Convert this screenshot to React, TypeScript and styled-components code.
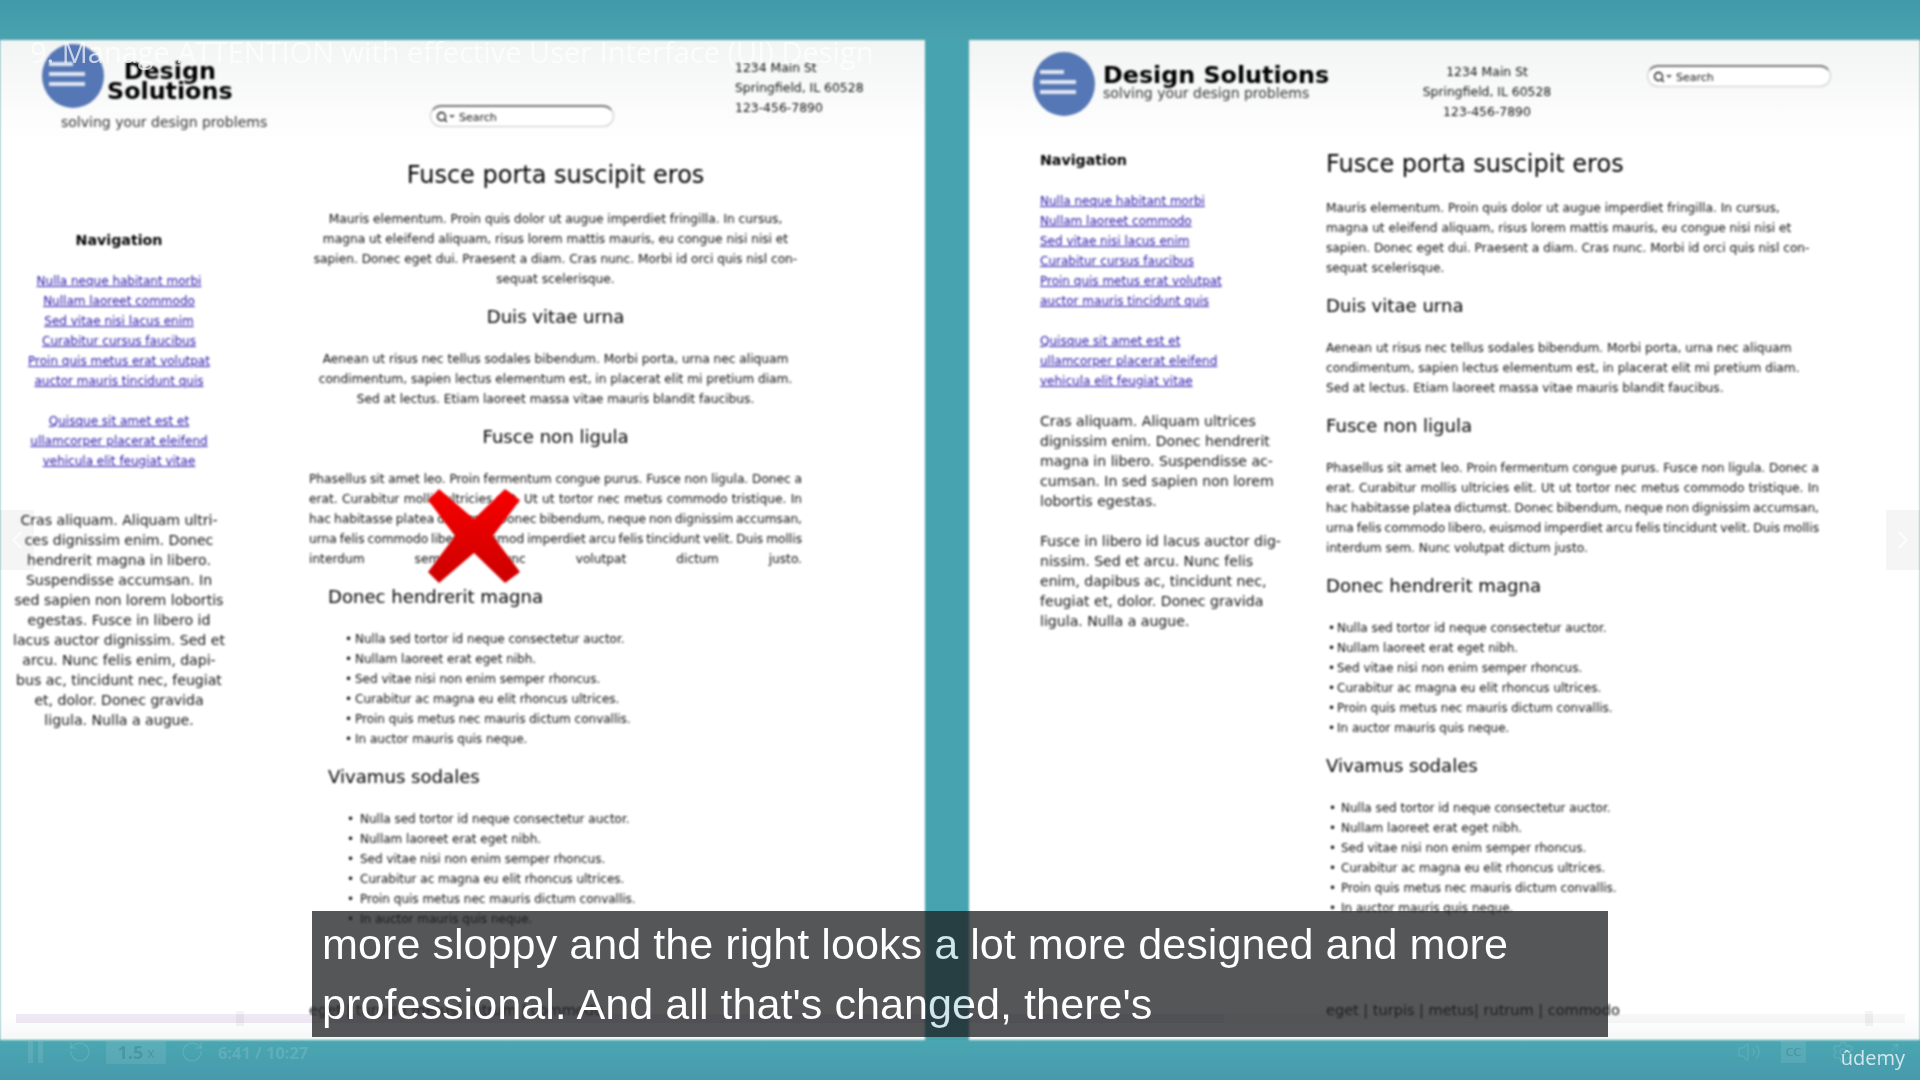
import styled, { createGlobalStyle } from 'styled-components'
import { RotateCcw, RotateCw, Volume2, Settings, Maximize2, ChevronLeft, ChevronRight, Search as SearchIcon } from 'lucide-react'

const GlobalStyle = createGlobalStyle`
  html, body { margin: 0; padding: 0; background: #479fab; }
  body { font-family: "DejaVu Sans", sans-serif; overflow: hidden; }
`

const intro = [
  'Mauris elementum. Proin quis dolor ut augue imperdiet fringilla. In cursus,',
  'magna ut eleifend aliquam, risus lorem mattis mauris, eu congue nisi nisi et',
  'sapien. Donec eget dui. Praesent a diam. Cras nunc. Morbi id orci quis nisl con-',
  'sequat scelerisque.',
]
const duis = [
  'Aenean ut risus nec tellus sodales bibendum. Morbi porta, urna nec aliquam',
  'condimentum, sapien lectus elementum est, in placerat elit mi pretium diam.',
  'Sed at lectus. Etiam laoreet massa vitae mauris blandit faucibus.',
]
const ligula = [
  'Phasellus sit amet leo. Proin fermentum congue purus. Fusce non ligula. Donec a',
  'erat. Curabitur mollis ultricies elit. Ut ut tortor nec metus commodo tristique. In',
  'hac habitasse platea dictumst. Donec bibendum, neque non dignissim accumsan,',
  'urna felis commodo libero, euismod imperdiet arcu felis tincidunt velit. Duis mollis',
  'interdum sem. Nunc volutpat dictum justo.',
]
const bullets = [
  'Nulla sed tortor id neque consectetur auctor.',
  'Nullam laoreet erat eget nibh.',
  'Sed vitae nisi non enim semper rhoncus.',
  'Curabitur ac magna eu elit rhoncus ultrices.',
  'Proin quis metus nec mauris dictum convallis.',
  'In auctor mauris quis neque.',
]
const linksA = [
  'Nulla neque habitant morbi',
  'Nullam laoreet commodo',
  'Sed vitae nisi lacus enim',
  'Curabitur cursus faucibus',
  'Proin quis metus erat volutpat',
  'auctor mauris tincidunt quis',
]
const linksB = ['Quisque sit amet est et', 'ullamcorper placerat eleifend', 'vehicula elit feugiat vitae']
const asideLeft = [
  'Cras aliquam. Aliquam ultri-',
  'ces dignissim enim. Donec',
  'hendrerit magna in libero.',
  'Suspendisse accumsan. In',
  'sed sapien non lorem lobortis',
  'egestas. Fusce in libero id',
  'lacus auctor dignissim. Sed et',
  'arcu. Nunc felis enim, dapi-',
  'bus ac, tincidunt nec, feugiat',
  'et, dolor. Donec gravida',
  'ligula. Nulla a augue.',
]
const asideRightA = [
  'Cras aliquam. Aliquam ultrices',
  'dignissim enim. Donec hendrerit',
  'magna in libero. Suspendisse ac-',
  'cumsan. In sed sapien non lorem',
  'lobortis egestas.',
]
const asideRightB = [
  'Fusce in libero id lacus auctor dig-',
  'nissim. Sed et arcu. Nunc felis',
  'enim, dapibus ac, tincidunt nec,',
  'feugiat et, dolor. Donec gravida',
  'ligula. Nulla a augue.',
]

function LogoMark() {
  return (
    <LogoSvg viewBox='0 0 62 64'>
      <ellipse cx='31' cy='32' rx='31' ry='32' fill='#5577b5' />
      <rect x='7' y='18' width='24' height='4' fill='#dfe6f2' />
      <rect x='7' y='28' width='36' height='4' fill='#dfe6f2' />
      <rect x='7' y='38' width='36' height='4' fill='#dfe6f2' />
    </LogoSvg>
  )
}

function SearchBox() {
  return (
    <SearchField>
      <SearchIcon size={12} strokeWidth={2.6} />
      <SearchCaret />
      <span>Search</span>
    </SearchField>
  )
}

function Address({ $center }: { $center?: boolean }) {
  return (
    <AddressBlock $center={$center}>
      <div>1234 Main St</div>
      <div>Springfield, IL 60528</div>
      <div>123-456-7890</div>
    </AddressBlock>
  )
}

function Lines({ items, $center, $justify }: { items: string[]; $center?: boolean; $justify?: boolean }) {
  return (
    <Para>
      {items.map((line, i) => (
        <TextLine key={i} $center={$center} $justify={$justify && (i < items.length - 1 || !!$center)}>
          {line}
        </TextLine>
      ))}
    </Para>
  )
}

function LinkGroup({ items }: { items: string[] }) {
  return (
    <Links>
      {items.map(l => (
        <li key={l}>
          <NavLink href='#'>{l}</NavLink>
        </li>
      ))}
    </Links>
  )
}

function Bullets({ $indent, $gap }: { $indent: number; $gap: number }) {
  return (
    <BulletList $indent={$indent} $gap={$gap}>
      {bullets.map(b => (
        <li key={b}>{b}</li>
      ))}
    </BulletList>
  )
}

export default function App() {
  return (
    <>
      <GlobalStyle />
      <Stage>
        <TopBand />
        <Pages>
          <LeftPage>
            <LeftHeader>
              <LeftBrand>
                <LeftBrandRow>
                  <LogoMark />
                  <StackedName>
                    Design
                    <br />
                    Solutions
                  </StackedName>
                </LeftBrandRow>
                <LeftTagline>solving your design problems</LeftTagline>
              </LeftBrand>
              <LeftSearchSlot>
                <SearchBox />
              </LeftSearchSlot>
              <LeftAddressSlot>
                <Address />
              </LeftAddressSlot>
            </LeftHeader>
            <LeftBody>
              <LeftAside>
                <NavTitle>Navigation</NavTitle>
                <LinkGroup items={linksA} />
                <LinkGroup items={linksB} />
                <AsideText>
                  {asideLeft.map(l => (
                    <div key={l}>{l}</div>
                  ))}
                </AsideText>
              </LeftAside>
              <LeftMain>
                <Title $center>Fusce porta suscipit eros</Title>
                <Lines items={intro} $center />
                <SubTitle $center>Duis vitae urna</SubTitle>
                <Lines items={duis} $center />
                <SubTitle $center>Fusce non ligula</SubTitle>
                <Lines items={ligula} $justify $center />
                <SubTitle $indent={19}>Donec hendrerit magna</SubTitle>
                <Bullets $indent={46} $gap={10} />
                <SubTitle $indent={19}>Vivamus sodales</SubTitle>
                <Bullets $indent={51} $gap={13} />
                <Footer $top={71}>eget | turpis | metus| rutrum | commodo</Footer>
              </LeftMain>
            </LeftBody>
          </LeftPage>

          <RightPage>
            <RightHeader>
              <RightBrand>
                <LogoMark />
                <RightNameBlock>
                  <InlineName>Design Solutions</InlineName>
                  <RightTagline>solving your design problems</RightTagline>
                </RightNameBlock>
              </RightBrand>
              <RightAddressSlot>
                <Address $center />
              </RightAddressSlot>
              <RightSearchSlot>
                <SearchBox />
              </RightSearchSlot>
            </RightHeader>
            <RightBody>
              <RightAside>
                <NavTitle>Navigation</NavTitle>
                <LinkGroup items={linksA} />
                <LinkGroup items={linksB} />
                <AsideText $left>
                  {asideRightA.map(l => (
                    <div key={l}>{l}</div>
                  ))}
                </AsideText>
                <AsideText $left>
                  {asideRightB.map(l => (
                    <div key={l}>{l}</div>
                  ))}
                </AsideText>
              </RightAside>
              <RightMain>
                <Title>Fusce porta suscipit eros</Title>
                <Lines items={intro} />
                <SubTitle>Duis vitae urna</SubTitle>
                <Lines items={duis} />
                <SubTitle>Fusce non ligula</SubTitle>
                <Lines items={ligula} $justify />
                <SubTitle>Donec hendrerit magna</SubTitle>
                <Bullets $indent={11} $gap={9} />
                <SubTitle>Vivamus sodales</SubTitle>
                <Bullets $indent={15} $gap={12} />
                <Footer $top={82}>eget | turpis | metus| rutrum | commodo</Footer>
              </RightMain>
            </RightBody>
          </RightPage>
        </Pages>
        <BottomBand />

        <LectureTitle>9. Manage ATTENTION with effective User Interface (UI) Design</LectureTitle>

        <RedCross viewBox='0 0 92 94'>
          <defs>
            <linearGradient id='crossFill' x1='0' y1='0' x2='0' y2='1'>
              <stop offset='0' stopColor='#f80000' />
              <stop offset='1' stopColor='#cc0000' />
            </linearGradient>
          </defs>
          <path
            d='M11 0 L46 30 L77 0 L92 11 L65 47 L92 83 L77 94 L46 64 L11 94 L0 83 L27 47 L0 11 Z'
            fill='url(#crossFill)'
          />
        </RedCross>

        <SideArrow $side='left'>
          <ChevronLeft size={30} strokeWidth={1.5} />
        </SideArrow>
        <SideArrow $side='right'>
          <ChevronRight size={30} strokeWidth={1.5} />
        </SideArrow>

        <Progress>
          <ProgressDone />
          <ProgressKnob $x={220} />
          <ProgressKnob $x={1849} />
        </Progress>

        <Controls>
          <ControlsLeft>
            <PauseIcon>
              <i />
              <i />
            </PauseIcon>
            <RotateCcw size={24} strokeWidth={1.5} />
            <RateBox>
              1.5<small>x</small>
            </RateBox>
            <RotateCw size={24} strokeWidth={1.5} />
            <TimeCode>6:41 / 10:27</TimeCode>
          </ControlsLeft>
          <ControlsRight>
            <VolumeSlot>
              <Volume2 size={24} strokeWidth={1.5} />
            </VolumeSlot>
            <CcBox>CC</CcBox>
            <Settings size={24} strokeWidth={1.5} />
            <Maximize2 size={20} strokeWidth={1.5} />
          </ControlsRight>
        </Controls>
        <Wordmark>ûdemy</Wordmark>

        <Caption>
          <CaptionLine>more sloppy and the right looks a lot more designed and more</CaptionLine>
          <CaptionLine>professional. And all that's changed, there's</CaptionLine>
        </Caption>
      </Stage>
    </>
  )
}

const Stage = styled.div`
  position: relative;
  width: 1920px;
  height: 1080px;
  display: flex;
  flex-direction: column;
  overflow: hidden;
  background: #479fab;
`

const TopBand = styled.div`
  height: 40px;
  flex: none;
  background: linear-gradient(180deg, #419aa9 0%, #49a2ae 100%);
`

const BottomBand = styled.div`
  height: 40px;
  flex: none;
  background: linear-gradient(180deg, #4aa7b2 0%, #4799ac 100%);
`

const Pages = styled.div`
  flex: none;
  height: 1000px;
  display: flex;
  justify-content: space-between;
  background: #47a3af;
`

const PageBase = styled.div`
  height: 1000px;
  overflow: hidden;
  color: #1a1a1a;
  background: linear-gradient(180deg, #f3f4f4 0px, #fff 100px, #fff 975px, #f6f7f7 100%);
  filter: blur(0.8px);
`

const LeftPage = styled(PageBase)`
  width: 925px;
`

const RightPage = styled(PageBase)`
  width: 951px;
`

const LeftHeader = styled.header`
  height: 120px;
  display: flex;
`

const LeftBrand = styled.div`
  width: 388px;
  flex: none;
  padding: 4px 0 0 42px;
  box-sizing: border-box;
`

const LeftBrandRow = styled.div`
  display: flex;
  align-items: center;
`

const LogoSvg = styled.svg`
  width: 62px;
  height: 64px;
  flex: none;
`

const StackedName = styled.div`
  margin-left: 3px;
  padding-top: 10px;
  font-size: 23.8px;
  line-height: 20px;
  font-weight: 700;
  color: #000;
  text-align: center;
`

const LeftTagline = styled.div`
  margin: 4px 0 0 19px;
  font-size: 14px;
  line-height: 20px;
  color: #333;
  white-space: nowrap;
`

const LeftSearchSlot = styled.div`
  width: 347px;
  flex: none;
  padding: 65px 0 0 42px;
  box-sizing: border-box;
`

const LeftAddressSlot = styled.div`
  padding-top: 18px;
`

const SearchField = styled.div`
  width: 184px;
  height: 22px;
  box-sizing: border-box;
  display: flex;
  align-items: center;
  gap: 1px;
  padding-left: 5px;
  border: 1px solid #c9c9c9;
  border-top: 2px solid #777;
  border-radius: 11px;
  background: #fff;
  font-size: 11px;
  color: #111;
  span {
    margin-left: 3px;
    padding-top: 2px;
  }
`

const SearchCaret = styled.b`
  width: 0;
  height: 0;
  border-left: 3px solid transparent;
  border-right: 3px solid transparent;
  border-top: 3px solid #555;
`

const AddressBlock = styled.div<{ $center?: boolean }>`
  font-size: 12.4px;
  line-height: 20px;
  color: #111;
  white-space: nowrap;
  text-align: ${p => (p.$center ? 'center' : 'left')};
`

const LeftBody = styled.div`
  display: flex;
`

const LeftAside = styled.aside`
  width: 238px;
  flex: none;
  padding-top: 70px;
  text-align: center;
`

const LeftMain = styled.main`
  width: 493px;
  flex: none;
  margin-left: 71px;
`

const NavTitle = styled.div`
  font-size: 14.2px;
  line-height: 20px;
  font-weight: 700;
  color: #000;
  padding-bottom: 1px;
`

const Links = styled.ul`
  list-style: none;
  margin: 20px 0 0;
  padding: 0;
  font-size: 12px;
  line-height: 20px;
  white-space: nowrap;
`

const NavLink = styled.a`
  color: #2410a8;
  text-decoration: underline;
`

const AsideText = styled.div<{ $left?: boolean }>`
  margin-top: ${p => (p.$left ? '20px' : '39px')};
  font-size: 14.1px;
  line-height: 20px;
  color: #111;
  white-space: nowrap;
  text-align: ${p => (p.$left ? 'left' : 'center')};
`

const Title = styled.h1<{ $center?: boolean }>`
  margin: 0 0 19px;
  height: 30px;
  font-size: 24px;
  line-height: 30px;
  font-weight: 400;
  color: #000;
  text-align: ${p => (p.$center ? 'center' : 'left')};
`

const SubTitle = styled.h2<{ $center?: boolean; $indent?: number }>`
  margin: 16px 0 20px;
  padding-left: ${p => p.$indent ?? 0}px;
  height: 24px;
  font-size: 18.1px;
  line-height: 24px;
  font-weight: 400;
  color: #000;
  text-align: ${p => (p.$center ? 'center' : 'left')};
`

const Para = styled.div`
  font-size: 12.2px;
  line-height: 20px;
  color: #0c0c0c;
`

const TextLine = styled.div<{ $center?: boolean; $justify?: boolean }>`
  white-space: nowrap;
  word-spacing: ${p => (p.$justify ? '-1px' : '0')};
  text-align: ${p => (p.$justify ? 'justify' : p.$center ? 'center' : 'left')};
  text-align-last: ${p => (p.$justify ? 'justify' : 'auto')};
`

const BulletList = styled.ul<{ $indent: number; $gap: number }>`
  list-style: none;
  margin: 0;
  padding: 0 0 0 ${p => p.$indent - p.$gap}px;
  font-size: 12px;
  line-height: 20px;
  color: #0c0c0c;
  li {
    display: flex;
    white-space: nowrap;
  }
  li::before {
    content: '•';
    width: ${p => p.$gap}px;
    flex: none;
  }
`

const Footer = styled.div<{ $top: number }>`
  margin-top: ${p => p.$top}px;
  font-size: 14.5px;
  line-height: 20px;
  color: #111;
  white-space: nowrap;
`

const RightHeader = styled.header`
  height: 109px;
  display: flex;
  align-items: flex-start;
`

const RightBrand = styled.div`
  width: 405px;
  flex: none;
  padding: 12px 0 0 64px;
  box-sizing: border-box;
  display: flex;
`

const RightNameBlock = styled.div`
  margin-left: 8px;
  padding-top: 10px;
`

const InlineName = styled.div`
  font-size: 23.8px;
  line-height: 26px;
  font-weight: 700;
  color: #000;
  white-space: nowrap;
`

const RightTagline = styled.div`
  margin-top: -3px;
  font-size: 14px;
  line-height: 17px;
  color: #333;
  white-space: nowrap;
`

const RightAddressSlot = styled.div`
  width: 200px;
  flex: none;
  margin-left: 13px;
  padding-top: 22px;
`

const RightSearchSlot = styled.div`
  margin-left: 60px;
  padding-top: 25px;
`

const RightBody = styled.div`
  display: flex;
`

const RightAside = styled.aside`
  width: 357px;
  flex: none;
  padding: 1px 0 0 71px;
  box-sizing: border-box;
`

const RightMain = styled.main`
  width: 493px;
  flex: none;
`

const LectureTitle = styled.div`
  position: absolute;
  left: 30px;
  top: 34px;
  font-family: 'Open Sans', sans-serif;
  font-size: 29px;
  line-height: 36px;
  color: rgba(255, 255, 255, 0.68);
  white-space: nowrap;
  filter: blur(0.5px);
`

const RedCross = styled.svg`
  position: absolute;
  left: 428px;
  top: 489px;
  width: 92px;
  height: 94px;
  filter: blur(0.8px);
`

const SideArrow = styled.div<{ $side: 'left' | 'right' }>`
  position: absolute;
  ${p => p.$side}: 0;
  top: 510px;
  width: 34px;
  height: 60px;
  display: flex;
  align-items: center;
  justify-content: center;
  background: rgba(60, 60, 60, 0.05);
  color: rgba(255, 255, 255, 0.75);
`

const Progress = styled.div`
  position: absolute;
  left: 16px;
  right: 15px;
  top: 1014px;
  height: 9px;
  background: rgba(60, 60, 60, 0.04);
`

const ProgressDone = styled.div`
  width: 1208px;
  height: 100%;
  background: rgba(140, 60, 220, 0.07);
`

const ProgressKnob = styled.span<{ $x: number }>`
  position: absolute;
  left: ${p => p.$x}px;
  top: -3px;
  width: 8px;
  height: 15px;
  background: rgba(60, 60, 60, 0.06);
`

const Controls = styled.div`
  position: absolute;
  left: 28px;
  right: 20px;
  top: 1040px;
  height: 24px;
  display: flex;
  justify-content: space-between;
  color: rgba(255, 255, 255, 0.1);
  filter: blur(0.7px);
`

const ControlsLeft = styled.div`
  display: flex;
  align-items: center;
  gap: 14px;
`

const ControlsRight = styled.div`
  display: flex;
  align-items: center;
  gap: 25px;
`

const VolumeSlot = styled.div`
  display: flex;
  margin-right: -5px;
`

const PauseIcon = styled.div`
  width: 15px;
  height: 22px;
  margin-right: 11px;
  display: flex;
  gap: 5px;
  i {
    display: block;
    width: 5px;
    height: 100%;
    background: rgba(255, 255, 255, 0.1);
  }
`

const RateBox = styled.div`
  width: 60px;
  height: 23px;
  display: flex;
  align-items: center;
  justify-content: center;
  background: rgba(255, 255, 255, 0.09);
  font-family: 'Open Sans', sans-serif;
  font-size: 18px;
  font-weight: 700;
  color: rgba(0, 60, 70, 0.18);
  small {
    font-size: 14px;
    margin-left: 4px;
    font-weight: 400;
  }
`

const TimeCode = styled.div`
  font-family: 'Open Sans', sans-serif;
  font-size: 16.4px;
  font-weight: 700;
  color: rgba(255, 255, 255, 0.13);
  white-space: nowrap;
`

const CcBox = styled.div`
  width: 25px;
  height: 22px;
  display: flex;
  align-items: center;
  justify-content: center;
  background: rgba(255, 255, 255, 0.09);
  font-size: 11px;
  color: rgba(60, 130, 140, 0.6);
`

const Wordmark = styled.div`
  position: absolute;
  right: 15px;
  top: 1046px;
  font-family: 'Open Sans', sans-serif;
  font-size: 20px;
  line-height: 24px;
  color: rgba(255, 255, 255, 0.75);
  filter: blur(0.5px);
`

const Caption = styled.div`
  position: absolute;
  left: 312px;
  top: 911px;
  width: 1296px;
  height: 126px;
  box-sizing: border-box;
  padding: 3px 10px;
  background: rgba(28, 29, 31, 0.75);
  font-family: 'Liberation Sans', Arial, sans-serif;
  font-size: 43.2px;
  line-height: 60px;
  color: #fff;
`

const CaptionLine = styled.div`
  white-space: nowrap;
  background: linear-gradient(90deg, #fff 603px, #cfe6ea 603px, #cfe6ea 647px, #fff 647px);
  -webkit-background-clip: text;
  background-clip: text;
  -webkit-text-fill-color: transparent;
`
